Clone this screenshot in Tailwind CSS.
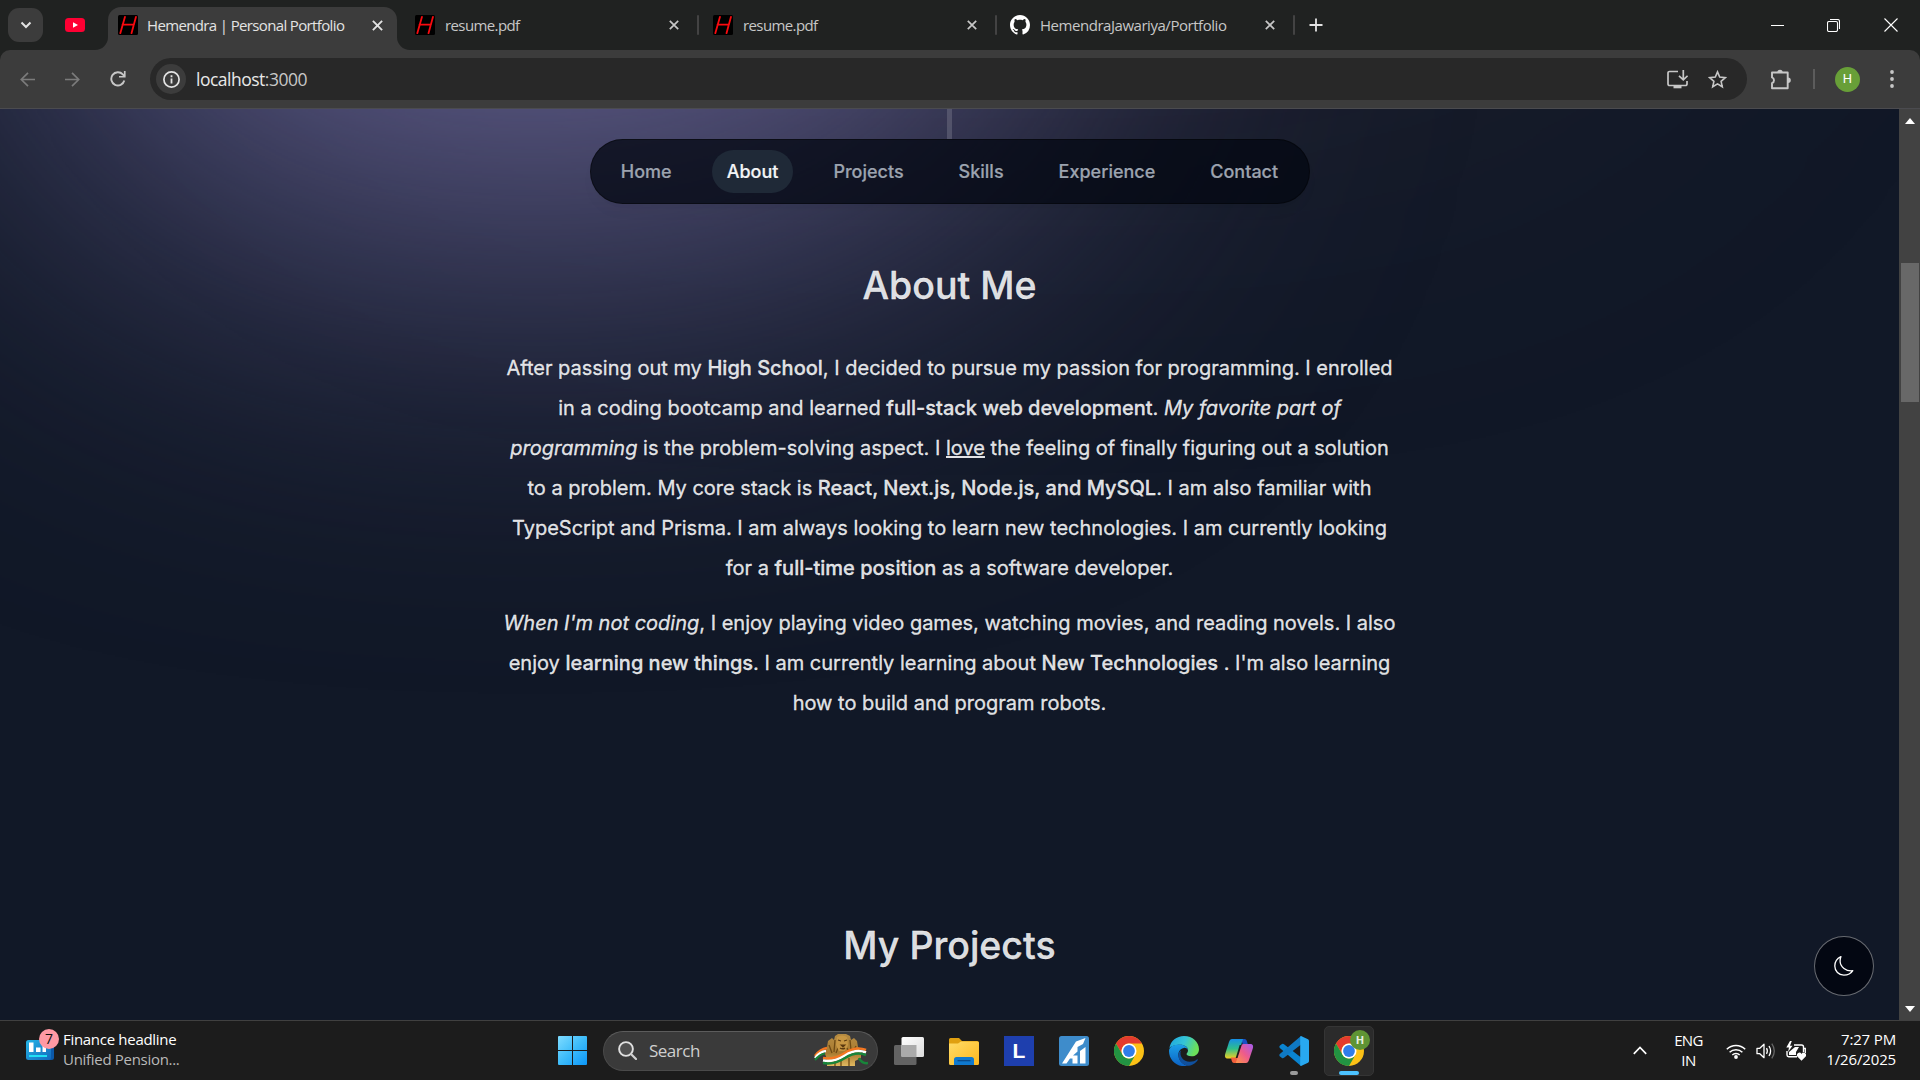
<!DOCTYPE html>
<html lang="en">
<head>
<meta charset="utf-8">
<title>Hemendra | Personal Portfolio</title>
<script src="https://cdn.jsdelivr.net/npm/@tailwindcss/browser@4"></script>
</head>
<body class="w-[1920px] h-[1080px] overflow-hidden flex flex-col bg-[#202221] font-['Open_Sans',sans-serif]">

<svg class="hidden">
  <defs>
    <symbol id="fav" viewBox="0 0 20 20"><rect width="20" height="20" rx="1.500" fill="#000"/><path d="M7 1.800 2.300 18.200M18 1.800l-4.500 16.400M4.500 9.600H16" stroke="#fa0a0f" stroke-width="1.800" fill="none" stroke-linecap="round"/></symbol>
    <symbol id="x" viewBox="0 0 10 10"><path d="M.8.8l8.400 8.400M9.200.8.8 9.200" stroke="currentColor" stroke-width="1.700" fill="none"/></symbol>
    <symbol id="chrome" viewBox="0 0 30 30">
      <circle cx="15" cy="15" r="15" fill="#fbc116"/>
      <path d="M15 0A15 15 0 0 1 28 7.500H15A7.500 7.500 0 0 0 8.500 18.750L2 7.500A15 15 0 0 1 15 0z" fill="#e33b2e"/>
      <path d="M2 7.500 8.500 18.750A7.500 7.500 0 0 0 21.500 18.750L15 30A15 15 0 0 1 2 7.500z" fill="#229342"/>
      <circle cx="15" cy="15" r="7.500" fill="#fff"/><circle cx="15" cy="15" r="5.900" fill="#2f7de9"/>
    </symbol>
  </defs>
</svg>

<!-- Tab strip -->
<header class="h-[50px] shrink-0 flex items-start text-[15px] text-[#c7c7c7]">
  <button class="ml-2 mt-2 w-[35px] h-[34px] rounded-[11px] bg-[#3c3c3c] flex items-center justify-center text-[#e3e3e3]"><svg class="w-[12px] h-[8px]" viewBox="0 0 12 8"><path d="M1.500 1.500 6 6l4.500-4.500" fill="none" stroke="currentColor" stroke-width="2"/></svg></button>
  <svg class="ml-[22px] mt-[18px] w-5 h-[14px]" viewBox="0 0 20 14"><rect width="20" height="14" rx="3.500" fill="#ff0033"/><path d="M8 4.200v5.600L13 7z" fill="#fff"/></svg>
  <div class="relative ml-[23px] mt-[7px] w-[289px] h-[43px] rounded-t-[13px] bg-[#3c3c3c] flex items-center pl-[10px] pr-[14px] text-[#e3e3e3]">
    <svg class="absolute -left-[13px] bottom-0 w-[13px] h-[13px]" viewBox="0 0 13 13"><path d="M13 0v13H0A13 13 0 0 0 13 0z" fill="#3c3c3c"/></svg>
    <svg class="absolute -right-[13px] bottom-0 w-[13px] h-[13px]" viewBox="0 0 13 13"><path d="M0 0v13h13A13 13 0 0 1 0 0z" fill="#3c3c3c"/></svg>
    <svg class="w-5 h-5 -mt-[7px]"><use href="#fav"/></svg>
    <span class="ml-[9px] -mt-[7px] whitespace-nowrap tracking-[-0.64px]">Hemendra | Personal Portfolio</span>
    <svg class="ml-auto w-[11px] h-[11px] -mt-[7px]"><use href="#x"/></svg>
  </div>
  <div class="h-[50px] flex items-center w-[303px] pl-[18px] pr-[1px]">
    <svg class="w-5 h-5"><use href="#fav"/></svg>
    <span class="ml-[10px] tracking-[-0.6px]">resume.pdf</span>
    <svg class="ml-auto w-[10px] h-[10px]"><use href="#x"/></svg>
    <i class="ml-[18px] w-[2px] h-5 rounded bg-[#434343]"></i>
  </div>
  <div class="h-[50px] flex items-center w-[297px] pl-[13px] pr-0">
    <svg class="w-5 h-5"><use href="#fav"/></svg>
    <span class="ml-[10px] tracking-[-0.6px]">resume.pdf</span>
    <svg class="ml-auto w-[10px] h-[10px]"><use href="#x"/></svg>
    <i class="ml-[18px] w-[2px] h-5 rounded bg-[#434343]"></i>
  </div>
  <div class="h-[50px] flex items-center w-[298px] pl-[13px] pr-0">
    <svg class="w-5 h-5" viewBox="0 0 16 16"><path fill="#fff" d="M8 0C3.580 0 0 3.580 0 8c0 3.540 2.290 6.530 5.470 7.590.4.070.55-.17.55-.38 0-.19-.01-.82-.01-1.490-2.010.37-2.530-.49-2.690-.94-.09-.23-.48-.94-.82-1.130-.28-.15-.68-.52-.01-.53.63-.01 1.080.58 1.230.82.72 1.210 1.870.87 2.330.66.07-.52.28-.87.51-1.070-1.780-.2-3.640-.89-3.640-3.950 0-.87.31-1.590.82-2.150-.08-.2-.36-1.020.08-2.120 0 0 .67-.21 2.200.82.64-.18 1.320-.27 2-.27s1.360.09 2 .27c1.530-1.040 2.200-.82 2.200-.82.44 1.100.16 1.920.08 2.120.51.56.82 1.270.82 2.150 0 3.070-1.870 3.750-3.650 3.950.29.25.54.73.54 1.480 0 1.070-.01 1.930-.01 2.200 0 .21.15.46.55.38A8.010 8.010 0 0 0 16 8c0-4.420-3.580-8-8-8z"/></svg>
    <span class="ml-[10px] whitespace-nowrap tracking-[-0.46px]">HemendraJawariya/Portfolio</span>
    <svg class="ml-auto w-[10px] h-[10px]"><use href="#x"/></svg>
    <i class="ml-[18px] w-[2px] h-5 rounded bg-[#434343]"></i>
  </div>
  <svg class="ml-[14px] mt-[18px] w-[14px] h-[14px]" viewBox="0 0 14 14"><path d="M7 .5v13M.5 7h13" stroke="#e3e3e3" stroke-width="1.800"/></svg>
  <div class="ml-auto h-[50px] flex items-center pr-[22px]">
    <svg class="w-[13px] h-[13px]" viewBox="0 0 13 13"><path d="M0 6.500h13" stroke="#fff"/></svg>
    <svg class="ml-[43px] w-[13px] h-[13px]" viewBox="0 0 13 13"><rect x=".5" y="2.500" width="10" height="10" rx="1.500" fill="none" stroke="#fff" stroke-width="1.100"/><path d="M3 .5h7.500a2 2 0 0 1 2 2V10" fill="none" stroke="#fff" stroke-width="1.100"/></svg>
    <svg class="ml-[44px] w-[14px] h-[14px]" viewBox="0 0 14 14"><path d="M.5.5l13 13M13.500.5l-13 13" stroke="#fff" stroke-width="1.100"/></svg>
  </div>
</header>

<!-- Toolbar -->
<div class="h-[59px] shrink-0 flex items-center bg-[#3c3c3c] rounded-t-[10px] border-b border-[#4b4b4f] text-[#c7c7c7]">
  <svg class="ml-5 w-[15px] h-[15px] text-[#7b7b7b]" viewBox="0 0 15 15"><path d="M15 7.500H1.500M8 .8 1.300 7.500 8 14.200" fill="none" stroke="currentColor" stroke-width="1.700"/></svg>
  <svg class="ml-[30px] w-[15px] h-[15px] text-[#7b7b7b]" viewBox="0 0 15 15"><path d="M0 7.500h13.500M7 .8l6.700 6.700L7 14.200" fill="none" stroke="currentColor" stroke-width="1.700"/></svg>
  <svg class="ml-[30px] w-4 h-4" viewBox="0 0 16 16"><path d="M14.300 9.500A6.600 6.600 0 1 1 12.800 3.400L14.600 5.300" fill="none" stroke="currentColor" stroke-width="1.900"/><path d="M15.600 0v6.600H9V4.900h4.900V0z" fill="currentColor"/></svg>
  <div class="ml-6 w-[1597px] h-[42px] rounded-full bg-[#282828] flex items-center pl-[6px] pr-5">
    <span class="w-[30px] h-[30px] rounded-full bg-[#3c3c3c] flex items-center justify-center"><svg class="w-[17px] h-[17px]" viewBox="0 0 17 17"><circle cx="8.500" cy="8.500" r="7.600" fill="none" stroke="#e3e3e3" stroke-width="1.700"/><path d="M8.500 7.500v5M8.500 4.300v1.900" stroke="#e3e3e3" stroke-width="1.800"/></svg></span>
    <span class="ml-[10px] text-[17.500px] tracking-[-0.5px] text-[#e8e8e8]">localhost<span class="text-[#c7c7c7]">:3000</span></span>
    <svg class="ml-auto w-[21px] h-[19px]" viewBox="0 0 21 19"><path d="M11 1.500H2.500a1.500 1.500 0 0 0-1.500 1.500v11a1.500 1.500 0 0 0 1.500 1.500h16a1.500 1.500 0 0 0 1.500-1.500v-3M16.300 0v9.500M12 5.800l4.300 4 4.300-4" fill="none" stroke="currentColor" stroke-width="1.700"/><path d="M6.500 16h8v2.300h-8z" fill="currentColor"/></svg>
    <svg class="ml-5 w-[19px] h-[19px]" viewBox="0 0 19 19"><path d="M9.500 1.900l2.200 5.200 5.600.5-4.200 3.700 1.200 5.500-4.800-2.900-4.800 2.900 1.200-5.500L1.700 7.600l5.600-.5z" fill="none" stroke="currentColor" stroke-width="1.600"/></svg>
  </div>
  <svg class="ml-6 w-[21px] h-[21px]" viewBox="0 0 21 21"><path d="M1 3.500h15.700v15.700H1v-5a3.100 3.100 0 0 0 0-5.800z" fill="none" stroke="currentColor" stroke-width="1.900" stroke-linejoin="round"/><path d="M6.300 3.500a2.700 2.700 0 0 1 5.400 0zM17 8.400a2.800 2.800 0 0 1 0 5.600z" fill="currentColor"/></svg>
  <i class="ml-[21px] w-[2px] h-5 bg-[#5c5c5c]"></i>
  <span class="ml-5 w-[25px] h-[25px] rounded-full bg-[#689f38] text-white text-[13px] font-['Roboto',sans-serif] flex items-center justify-center">H</span>
  <svg class="ml-[30px] w-1 h-[18px]" viewBox="0 0 4 18"><circle cx="2" cy="2" r="1.900" fill="currentColor"/><circle cx="2" cy="9" r="1.900" fill="currentColor"/><circle cx="2" cy="16" r="1.900" fill="currentColor"/></svg>
</div>

<!-- Page -->
<div class="h-[911px] shrink-0 flex">
  <main class="relative flex-1 overflow-hidden bg-[#111827] flex flex-col items-center font-['Inter',sans-serif] [font-optical-sizing:none] text-[#f9fafb]/90">
    <div class="absolute left-[300px] -top-[640px] w-[1375px] h-[625px] rounded-full bg-[#946263]/10 blur-[200px]"></div>
    <div class="absolute left-[30px] -top-[515px] w-[1010px] h-[625px] rounded-full bg-[#676394] blur-[200px]"></div>
    <div class="relative w-[5px] h-[30px] bg-white/15"></div>
    <nav class="relative w-[720px] h-[65px] rounded-full border border-black/40 bg-[#030712]/75 shadow-lg shadow-black/[0.03] flex items-center justify-center gap-[25px] text-[18px] font-medium text-[#9ca3af] [-webkit-text-stroke:0.2px]">
      <a class="px-[15px]">Home</a>
      <a class="px-[15px] h-[43px] rounded-full bg-[#1f2937] flex items-center text-[#f3f4f6]">About</a>
      <a class="px-[15px]">Projects</a>
      <a class="px-[15px]">Skills</a>
      <a class="px-[15px]">Experience</a>
      <a class="px-[15px]">Contact</a>
    </nav>
    <section class="relative mt-[59px] w-[900px] text-center text-[20px] leading-[40px] [-webkit-text-stroke:0.3px]">
      <h2 class="mb-10 text-[37.500px] leading-[45px] font-medium">About Me</h2>
      <p class="mb-[15px]">After passing out my <b class="font-medium">High School</b>, I decided to pursue my passion for programming. I enrolled<br>in a coding bootcamp and learned <b class="font-medium">full-stack web development</b>. <i>My favorite part of<br>programming</i> is the problem-solving aspect. I <u>love</u> the feeling of finally figuring out a solution<br>to a problem. My core stack is <b class="font-medium">React, Next.js, Node.js, and MySQL</b>. I am also familiar with<br>TypeScript and Prisma. I am always looking to learn new technologies. I am currently looking<br>for a <b class="font-medium">full-time position</b> as a software developer.</p>
      <p><i>When I'm not coding</i>, I enjoy playing video games, watching movies, and reading novels. I also<br>enjoy <b class="font-medium">learning new things</b>. I am currently learning about <b class="font-medium">New Technologies</b> . I'm also learning<br>how to build and program robots.</p>
    </section>
    <h2 class="relative mt-[200px] text-[37.500px] leading-[45px] font-medium [-webkit-text-stroke:0.3px]">My Projects</h2>
    <button class="absolute right-[25px] bottom-6 w-[60px] h-[60px] rounded-full bg-[#030712] border border-white/40 flex items-center justify-center">
      <svg class="w-[20px] h-[20px]" viewBox="0 0 20 20"><path d="M6.900.7C2.900 2.700.8 6.200.8 10c0 5.200 4 9.200 9 9.200 3.900 0 7.200-1.600 9-4.500-6.600.9-12.700-3.800-12.700-9.400 0-1.600.2-3.300.8-4.600z" fill="none" stroke="#fff" stroke-width="1.300" stroke-linejoin="round"/></svg>
    </button>
  </main>
  <aside class="w-[21px] bg-[#424242] flex flex-col items-center">
    <svg class="mt-[9px] w-[10px] h-[6px]" viewBox="0 0 10 6"><path d="M0 6 5 0l5 6z" fill="#fff"/></svg>
    <div class="mt-[139px] w-[18px] h-[139px] bg-[#686868]"></div>
    <svg class="mt-auto mb-[8px] w-[10px] h-[6px]" viewBox="0 0 10 6"><path d="M0 0h10L5 6z" fill="#fff"/></svg>
  </aside>
</div>

<!-- Taskbar -->
<footer class="h-[60px] shrink-0 flex items-center bg-[#1c1c1c] border-t border-[#404040] text-white text-[15px] leading-5">
  <div class="w-[558px] flex items-center pl-[26px] pb-1">
    <svg class="w-[34px] h-[34px] -mt-[7px]" viewBox="0 0 34 34">
      <defs><linearGradient id="nw" x1="0" y1="0" x2="1" y2="1"><stop stop-color="#25b5e6"/><stop offset="1" stop-color="#1268bd"/></linearGradient></defs>
      <rect x="18" y="12" width="10" height="20" rx="2.500" fill="#0b58a8"/><rect y="12" width="25" height="20" rx="2.500" fill="url(#nw)"/><path d="M3 14.500h4.500v9.500H3zM10 19.500h4.500v4.500H10zM16.500 16.500H20v7.500h-3.500z" fill="#fff"/><path d="M3 28h18" stroke="#1fe0f5" stroke-width="2"/>
      <circle cx="23" cy="11" r="10" fill="#ff99a4"/><text x="23" y="16" font-size="14" text-anchor="middle" fill="#111">7</text>
    </svg>
    <div class="ml-[3px] tracking-[-0.3px]"><div>Finance headline</div><div class="text-[#b9b9b9]">Unified Pension...</div></div>
  </div>
  <div class="flex items-center">
    <svg class="w-[29px] h-[29px]" viewBox="0 0 29 29"><defs><linearGradient id="win" x1="0" y1="0" x2="1" y2="1"><stop stop-color="#7fdcff"/><stop offset=".5" stop-color="#3dbcfa"/><stop offset="1" stop-color="#0c96f8"/></linearGradient></defs><path d="M0 1a1 1 0 0 1 1-1h13v14H0zM15 0h13a1 1 0 0 1 1 1v13H15zM0 15h14v14H1a1 1 0 0 1-1-1zM15 15h14v13a1 1 0 0 1-1 1H15z" fill="url(#win)"/></svg>
    <div class="ml-4 w-[275px] h-[40px] rounded-full bg-[#3a3a3a] border border-[#4a4a4a] border-t-[#5c5c5c] flex items-center pl-[14px] pr-[9px]">
      <svg class="w-[19px] h-[19px]" viewBox="0 0 19 19"><circle cx="8" cy="8" r="6.900" fill="#505050" stroke="#e0e0e0" stroke-width="1.900"/><path d="M13 13l5 5" stroke="#d0d0d0" stroke-width="2.200" stroke-linecap="round"/></svg>
      <span class="ml-[12px] text-[17px] tracking-[-0.5px] text-[#cfcfcf]">Search</span>
      <svg class="ml-auto w-[54px] h-[33px]" viewBox="0 0 54 33">
        <defs><linearGradient id="lion" x1="0" y1="0" x2="0" y2="1"><stop stop-color="#b58b42"/><stop offset=".6" stop-color="#a97b30"/><stop offset="1" stop-color="#e0b860"/></linearGradient></defs>
        <path d="M13 13l1-6 4-3 2 2 1-4 3-2h8l4 2 1 4 3-2 3 3 1 6 3 5v6l-6 3v5H13v-7l-2-5z" fill="url(#lion)"/>
        <path d="M15 11l3 8M42 12l-4 8M21 6l-1 12M36 6l1 10M21 24v8M27 26v6M35 24v8M24 14l-2 5M33 14l2 4" stroke="#6e4a14" stroke-width="1.300"/>
        <path d="M23 3q5-3 10 0l1 8-3 6h-6l-3-6z" fill="#c89743"/><path d="M24 6l3 1M33 6l-3 1M27 11h4l-2 2zM26 14q3 2 5 0" stroke="#5c3a10" stroke-width="1.100" fill="#5c3a10"/>
        <path d="M1 22Q6 15 13 14" stroke="#f47721" stroke-width="2.500" fill="none"/>
        <path d="M1 24Q6 17.500 12 17" stroke="#fff" stroke-width="2.500" fill="none"/>
        <path d="M1 26Q6 20 11 19.500" stroke="#18853a" stroke-width="2" fill="none"/>
        <path d="M9 24Q20 26 31 19T52 16" stroke="#f47721" stroke-width="2.600" fill="none"/>
        <path d="M9 26.500Q20 28.500 31 21.500T52 18.500" stroke="#fff" stroke-width="2.600" fill="none"/>
        <path d="M9 29Q20 31 31 24T52 21M45 24q3 6 9 5" stroke="#18853a" stroke-width="2.500" fill="none"/>
      </svg>
    </div>
    <svg class="ml-4 w-[30px] h-[28px]" viewBox="0 0 30 28"><defs><linearGradient id="tv" x1="0" y1="0" x2="1" y2="1"><stop stop-color="#fff"/><stop offset="1" stop-color="#dcdcdc"/></linearGradient></defs><rect y="8" width="22.500" height="20" rx="1.500" fill="#636363"/><rect x="7.500" width="22.500" height="20" rx="1.500" fill="url(#tv)"/><path d="M7.500 8h15v12h-15z" fill="#aaa"/></svg>
    <svg class="ml-[25px] w-[30px] h-[30px]" viewBox="0 0 30 30"><defs><linearGradient id="fd" x1="0" y1="0" x2="1" y2="1"><stop stop-color="#ffdc68"/><stop offset="1" stop-color="#fdb81e"/></linearGradient></defs><path d="M0 3.500a1.500 1.500 0 0 1 1.500-1.500H10l3 3h15a2 2 0 0 1 2 2v7H0z" fill="#e0a010"/><path d="M0 7.500h9l3-2h16.500A1.500 1.500 0 0 1 30 7v20.500a1.500 1.500 0 0 1-1.500 1.500h-27A1.500 1.500 0 0 1 0 27.500z" fill="url(#fd)"/><path d="M5 29v-5.500A2.500 2.500 0 0 1 7.500 21h15a2.500 2.500 0 0 1 2.500 2.500V29z" fill="#0f79cf"/><path d="M8.500 24.700h13" stroke="#0a4886" stroke-width="1.200"/></svg>
    <div class="ml-[25px] w-[30px] h-[30px] bg-[#1e3fae] flex items-center justify-center text-[21px] leading-[30px] font-bold font-['Liberation_Sans',sans-serif]">L</div>
    <svg class="ml-[25px] w-[30px] h-[30px]" viewBox="0 0 30 30"><rect width="30" height="30" rx="2.500" fill="#3e8ccb"/><path d="M3 27.500 17 5.500l9.500-3.500-2.500 6-5.500 3v4.500l-4.500 4h4.500v8h-5v-5h-2.500l-3.500 5z" fill="#fff"/><path d="M21 15l5.500-4v16.500H21z" fill="#fff"/></svg>
    <svg class="ml-[25px] w-[30px] h-[30px]"><use href="#chrome"/></svg>
    <svg class="ml-[25px] w-[30px] h-[30px]" viewBox="0 0 24 24"><defs><linearGradient id="e1" x1="0" y1="0" x2="1" y2=".3"><stop stop-color="#1da5df"/><stop offset=".55" stop-color="#35c4d6"/><stop offset="1" stop-color="#6be05a"/></linearGradient><linearGradient id="e2" x1="0" y1="0" x2="0" y2="1"><stop stop-color="#1ba0e8"/><stop offset="1" stop-color="#0c62c4"/></linearGradient></defs>
      <path d="M.3 9.500C1.300 4 6 0 12 0c7 0 12 5 12 10.500 0 3.600-2.700 5.700-6 5.700-2.700 0-4-1-4-1.800 0-.6 1.200-1.300 1.200-3C15.200 8.800 12.500 7 9 7 5 7 1.500 8.500.3 9.500z" fill="url(#e1)"/>
      <path d="M0 12C0 8.500 4 6.800 8 6.800c4.500 0 7.200 2.200 7.200 4.600-.7-1.500-2-2-3.200-1.900-2.500.2-4.500 2.500-4.500 5.500 0 4 3 7.500 7 8.800C6.500 25.500 0 19.500 0 12z" fill="url(#e2)"/>
      <path d="M9.500 11.500c-1.500 4.500 2 9 7 9 2.500 0 4.500-.7 5.800-1.800.5-.3.900.1.600.6C21 22 17.600 24 14.500 23.800 10 22.500 7.500 19 7.500 15.200c0-1.600.8-3 2-3.700z" fill="#10509d"/></svg>
    <svg class="ml-[25px] w-[30px] h-[30px]" viewBox="0 0 30 30"><defs><linearGradient id="c1" x1="0" y1="0" x2="0" y2="1"><stop stop-color="#168fe8"/><stop offset=".5" stop-color="#2fbf8a"/><stop offset="1" stop-color="#f2cf20"/></linearGradient><linearGradient id="c2" x1="1" y1="0" x2="0" y2="1"><stop stop-color="#a45cf0"/><stop offset=".5" stop-color="#ee5b8b"/><stop offset="1" stop-color="#ff9a45"/></linearGradient></defs>
      <path d="M17 3h3.500c1.500 0 2 1 2.500 2.500l1.200 4h-5z" fill="#1a4fc4"/><path d="M8 3h11l-4.800 15c-1 3-2 4.500-4 4.500H4c-3 0-3.500-2-2.800-4.500L5 6c.7-2 1.500-3 3-3z" fill="url(#c1)"/><path d="M22 27H11l4.800-15c1-3 2-4 4-4H26c3 0 3.500 2 2.800 4.500L25 24c-.7 2-1.500 3-3 3z" fill="url(#c2)"/><path d="M7 21.500h5c1.500 0 1.700-1 2.200-2.500L11.800 27H10c-1.500 0-2-1-2.500-3z" fill="#f2603c"/><path d="M17.700 9 13.500 22h-1.800l4-13z" fill="#1c1c1c"/></svg>
    <div class="relative ml-[25px] w-[30px] h-[30px]">
      <svg class="w-[30px] h-[30px]" viewBox="0 0 30 30"><path d="M1 9.500 3 8q1-.6 2 .2L24 23l-2 7L.8 12q-1-1.300.2-2.500z" fill="#0a84d0"/><path d="M1 20.500 3 22q1 .6 2-.2L24 7l-2-7L.8 18q-1 1.300.2 2.500z" fill="#0f79c4"/><path d="M22 0l7 3.200q1 .6 1 1.800v20q0 1.200-1 1.800L22 30q-.8-.3-.8-1V1q0-.7.8-1z" fill="#28a8f0"/></svg>
      <i class="absolute left-[11px] top-[35px] w-2 h-1 rounded-full bg-[#9a9a9a]"></i>
    </div>
    <div class="relative ml-[15px] w-[50px] h-[50px] rounded-[5px] bg-[#2b2b2b] border border-[#353535] flex items-center justify-center">
      <svg class="w-[30px] h-[30px]"><use href="#chrome"/></svg>
      <span class="absolute left-[25px] top-[3px] w-5 h-5 rounded-full bg-[#5f9434] text-[11px] font-bold flex items-center justify-center text-[#e8f0e0]">H</span>
      <i class="absolute left-[14px] top-[44px] w-5 h-1 rounded-full bg-[#4cc2ff]"></i>
    </div>
  </div>
  <div class="ml-auto flex items-center pr-6">
    <svg class="w-[14px] h-[9px]" viewBox="0 0 14 9"><path d="M.8 7.800 7 1.500l6.200 6.300" fill="none" stroke="#fff" stroke-width="1.700"/></svg>
    <div class="ml-[26px] w-[31px] pb-[2px] text-center tracking-[-0.6px] flex flex-col items-center"><span>ENG</span><span>IN</span></div>
    <svg class="ml-[22px] w-[20px] h-[16px]" viewBox="0 0 20 16"><path d="M.8 6.300a13 13 0 0 1 18.400 0M3.600 9.300a9 9 0 0 1 12.800 0M6.300 12a5.300 5.300 0 0 1 7.400 0" fill="none" stroke="#fff" stroke-width="1.500"/><circle cx="10" cy="14" r="1.900" fill="#fff"/></svg>
    <svg class="ml-[10px] w-[20px] h-[18px]" viewBox="0 0 20 18"><path d="M1 6.300h2.800L8 2.300v13.400l-4.200-4H1z" fill="none" stroke="#fff" stroke-width="1.300" stroke-linejoin="round"/><path d="M10.500 6.200q1.700 2.800 0 5.600M13 4q3.200 5 0 10" fill="none" stroke="#fff" stroke-width="1.300"/><path d="M15.800 1.700q5 7.300 0 14.600" fill="none" stroke="#666" stroke-width="1.300"/></svg>
    <svg class="ml-[10px] w-[20px] h-[20px]" viewBox="0 0 20 20"><path d="M8 4h7.500a2 2 0 0 1 2 2v5M11 15.800H2.700A1.700 1.700 0 0 1 1 14.100V10" fill="none" stroke="#fff" stroke-width="1.400"/><path d="M17.500 7.500h1.800V12" fill="none" stroke="#fff" stroke-width="1.300"/><path d="M3 14v-3l6-5h4l-3 5v3z" fill="#fff"/><path d="M4 0 .3 6.500H3L2 11l4.500-6.300H4L5.800 0z" fill="#fff"/><path d="M15.500 19.700 11.300 15.500a2.400 2.400 0 0 1 4.200-2.600 2.400 2.400 0 0 1 4.200 2.600z" fill="#fff"/></svg>
    <div class="ml-[20px] w-[70px] pb-1 flex flex-col items-end whitespace-nowrap tracking-[-0.15px]"><span>7:27 PM</span><span>1/26/2025</span></div>
  </div>
</footer>
</body>
</html>
